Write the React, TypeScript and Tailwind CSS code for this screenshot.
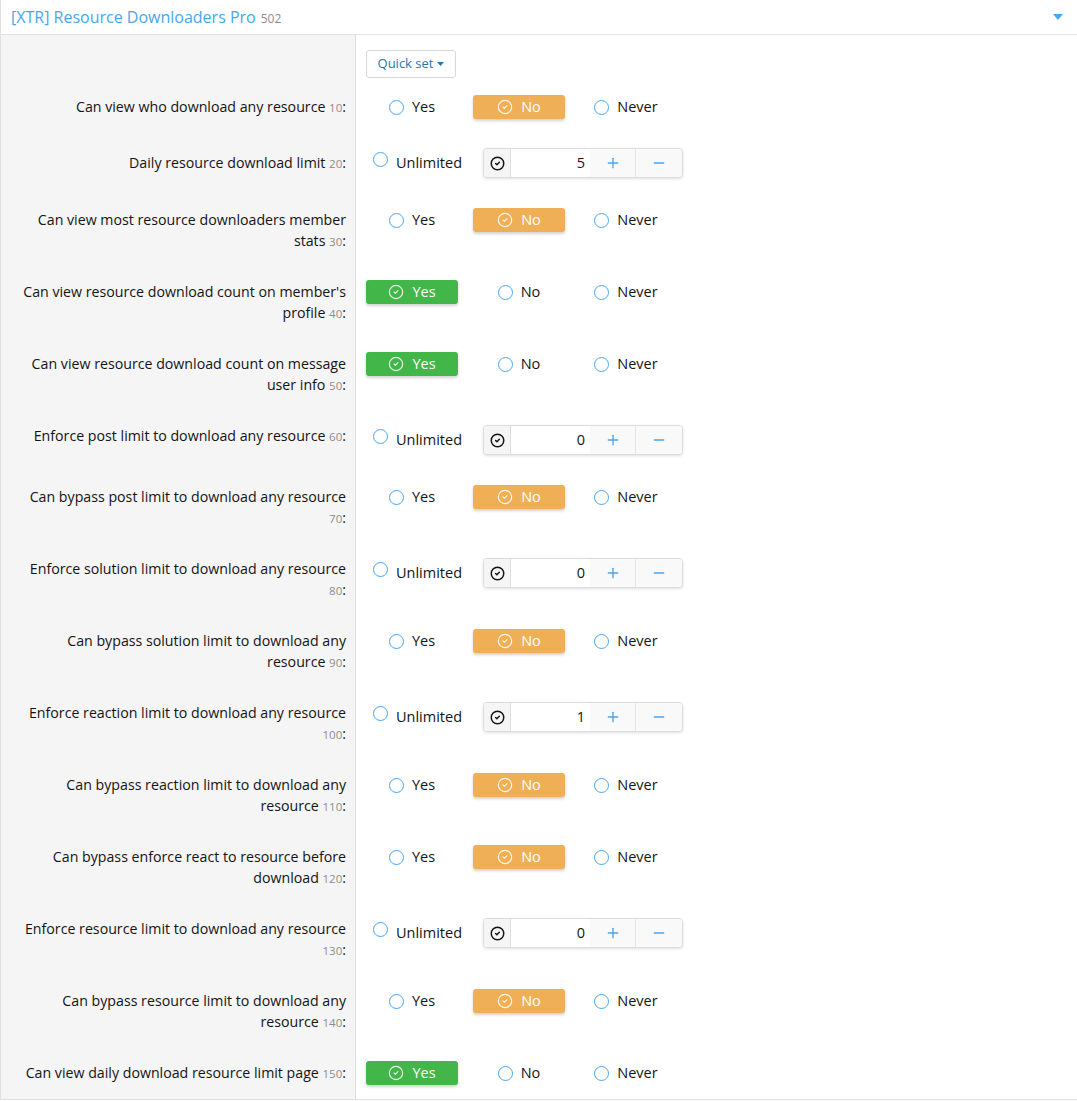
import { CircleCheck, Plus, Minus } from "lucide-react";

// ---------------------------------------------------------------------------
// Types / data
// ---------------------------------------------------------------------------

type Choice = "yes" | "no" | "never";

interface PermRow {
  lines: string[];
  order: number;
  kind: "choice" | "spin";
  value: Choice | number;
  h: number;
  ctrlPt?: number;
}

const rows: PermRow[] = [
  { lines: ["Can view who download any resource"], order: 10, kind: "choice", value: "no", h: 56 },
  { lines: ["Daily resource download limit"], order: 20, kind: "spin", value: 5, h: 57, ctrlPt: 6 },
  { lines: ["Can view most resource downloaders member", "stats"], order: 30, kind: "choice", value: "no", h: 72 },
  { lines: ["Can view resource download count on member's", "profile"], order: 40, kind: "choice", value: "yes", h: 72 },
  { lines: ["Can view resource download count on message", "user info"], order: 50, kind: "choice", value: "yes", h: 72 },
  { lines: ["Enforce post limit to download any resource"], order: 60, kind: "spin", value: 0, h: 61 },
  { lines: ["Can bypass post limit to download any resource", ""], order: 70, kind: "choice", value: "no", h: 72 },
  { lines: ["Enforce solution limit to download any resource", ""], order: 80, kind: "spin", value: 0, h: 72 },
  { lines: ["Can bypass solution limit to download any", "resource"], order: 90, kind: "choice", value: "no", h: 72 },
  { lines: ["Enforce reaction limit to download any resource", ""], order: 100, kind: "spin", value: 1, h: 72 },
  { lines: ["Can bypass reaction limit to download any", "resource"], order: 110, kind: "choice", value: "no", h: 72 },
  { lines: ["Can bypass enforce react to resource before", "download"], order: 120, kind: "choice", value: "no", h: 72 },
  { lines: ["Enforce resource limit to download any resource", ""], order: 130, kind: "spin", value: 0, h: 72 },
  { lines: ["Can bypass resource limit to download any", "resource"], order: 140, kind: "choice", value: "no", h: 72 },
  { lines: ["Can view daily download resource limit page"], order: 150, kind: "choice", value: "yes", h: 47 },
];

// ---------------------------------------------------------------------------
// Small pieces
// ---------------------------------------------------------------------------

function Radio({ label }: { label: string }) {
  return (
    <span className="flex items-center gap-2">
      <span className="h-[15px] w-[15px] rounded-full border-[1.5px] border-[#47a7eb] bg-white" />
      <span className="text-[14.5px] text-[#141414]">{label}</span>
    </span>
  );
}

function ChoiceCell({ label, active, tone }: { label: string; active: boolean; tone: string }) {
  return (
    <div className="flex h-6 w-[92px] items-center justify-center">
      {active ? (
        <span
          className={`flex h-6 w-[92px] items-center justify-center gap-2 rounded-[3px] text-[14.5px] text-white shadow-[0_2px_3px_rgba(0,0,0,0.18)] ${tone}`}
        >
          <CircleCheck size={16} strokeWidth={1.7} className="text-white/90" />
          <span>{label}</span>
        </span>
      ) : (
        <Radio label={label} />
      )}
    </div>
  );
}

function ChoiceControls({ value }: { value: Choice }) {
  return (
    <div className="flex gap-[15px]">
      <ChoiceCell label="Yes" active={value === "yes"} tone="bg-[#43b649]" />
      <ChoiceCell label="No" active={value === "no"} tone="bg-[#efaf57]" />
      <ChoiceCell label="Never" active={value === "never"} tone="bg-[#d9534f]" />
    </div>
  );
}

function SpinControls({ value }: { value: number }) {
  return (
    <div className="flex items-center">
      <div className="flex w-[117px] items-center gap-2 pl-[7px]">
        <span className="mt-[-8px] h-[15px] w-[15px] rounded-full border-[1.5px] border-[#47a7eb] bg-white" />
        <span className="text-[14.5px] text-[#141414]">Unlimited</span>
      </div>
      <div className="flex h-[30px] w-[200px] overflow-hidden rounded-[4px] border border-[#dcdcdc] bg-white shadow-[0_1px_3px_rgba(0,0,0,0.12)]">
        <span className="flex w-[27px] items-center justify-center border-r border-[#dcdcdc] bg-[#f5f5f5]">
          <CircleCheck size={15} strokeWidth={2.4} className="text-[#141414]" />
        </span>
        <span className="flex w-[79px] items-center justify-end pr-[5px] text-[14.5px] text-[#141414]">
          {value}
        </span>
        <span className="flex w-[45px] items-center justify-center bg-[#f9f9f9]">
          <Plus size={16} strokeWidth={2} className="text-[#47a7eb]" />
        </span>
        <span className="flex flex-1 items-center justify-center border-l border-[#e6e6e6] bg-[#f9f9f9]">
          <Minus size={16} strokeWidth={2} className="text-[#47a7eb]" />
        </span>
      </div>
    </div>
  );
}

// ---------------------------------------------------------------------------
// Page
// ---------------------------------------------------------------------------

export default function App() {
  return (
    <div className="min-h-screen bg-white font-['Open_Sans','Noto_Sans',sans-serif] antialiased">
      <div className="w-[1077px] border-b border-l border-[#dfdfdf]">
        {/* Header */}
        <div className="flex h-[35px] items-center justify-between border-b border-[#e3e3e3] pl-[10px] pr-[14px]">
          <div className="flex items-baseline gap-[5px]">
            <span className="text-[16px] text-[#47a7eb]">[XTR] Resource Downloaders Pro</span>
            <span className="text-[12px] text-[#8c8c8c]">502</span>
          </div>
          <svg width="10" height="6" viewBox="0 0 10 6" aria-hidden="true">
            <path d="M0 0h10L5 6z" fill="#47a7eb" />
          </svg>
        </div>

        {/* Body */}
        <div className="flex">
          <div className="w-[355px] shrink-0 border-r border-[#dfdfdf] bg-[#f5f5f5]">
            <div className="h-[51px]" />
            {rows.map((r) => (
              <div key={r.order} style={{ height: r.h }} className="pr-[9px] pt-[10px] text-right">
                {r.lines.map((line, i) => {
                  const last = i === r.lines.length - 1;
                  return (
                    <div key={i} className="whitespace-nowrap text-[14.2px] leading-[21px] text-[#141414]">
                      {line}
                      {last && (
                        <>
                          {line ? " " : ""}
                          <span className="text-[11.5px] text-[#8c8c8c]">{r.order}</span>:
                        </>
                      )}
                    </div>
                  );
                })}
              </div>
            ))}
          </div>

          <div className="flex-1 pl-[10px]">
            <div className="h-[51px] pt-[15px]">
              <button className="flex h-[28px] w-[90px] items-center justify-center gap-1 rounded-[3px] border border-[#d8d8d8] bg-white text-[13px] text-[#2577b1]">
                Quick set
                <svg width="7" height="4" viewBox="0 0 7 4" aria-hidden="true">
                  <path d="M0 0h7L3.5 4z" fill="#2577b1" />
                </svg>
              </button>
            </div>
            {rows.map((r) => (
              <div
                key={r.order}
                style={{ height: r.h, paddingTop: r.ctrlPt ?? (r.kind === "spin" ? 10 : 9) }}
              >
                {r.kind === "choice" ? (
                  <ChoiceControls value={r.value as Choice} />
                ) : (
                  <SpinControls value={r.value as number} />
                )}
              </div>
            ))}
          </div>
        </div>
      </div>
    </div>
  );
}
